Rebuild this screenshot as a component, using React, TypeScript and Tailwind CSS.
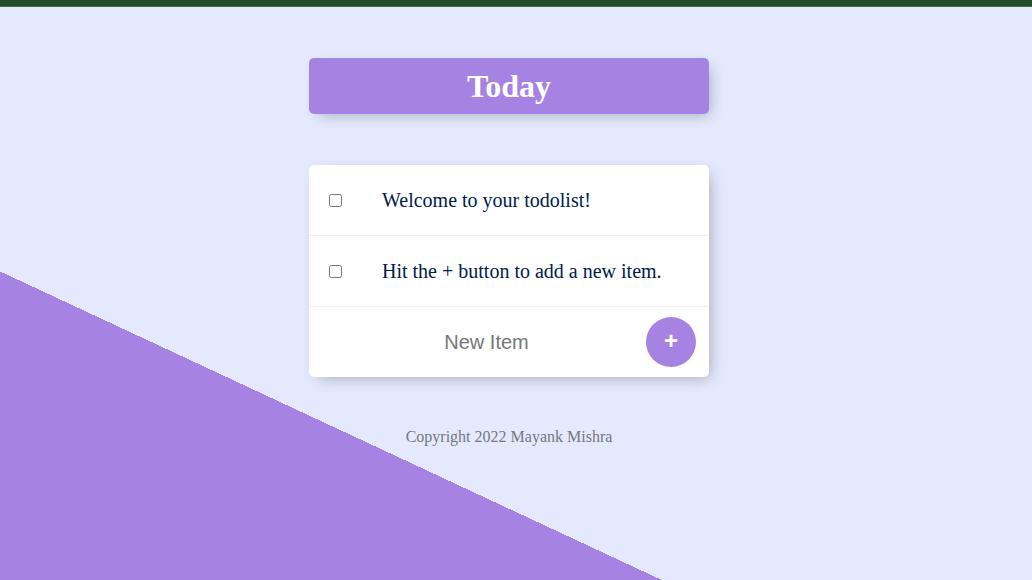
import React from "react";

export default function App() {
  const items = ["Welcome to your todolist!", "Hit the + button to add a new item."];
  return (
    <div className="w-full h-[580px] overflow-hidden bg-[linear-gradient(25deg,#A683E3_50%,#E4E9FD_50%)] bg-no-repeat bg-size-[100%_1024px] font-['Liberation_Serif',serif]">
      <div className="h-[7px] w-full bg-[#244d29] border-b border-[#3d6b42]" />
      <div className="w-[1018px] flex flex-col items-center">
        <div className="mt-[51px] w-[400px] h-[56px] rounded-[5px] bg-[#A683E3] flex items-center justify-center shadow-[5px_5px_15px_-5px_rgba(0,0,0,0.3)]">
          <h1 className="text-white font-bold text-[32px] leading-none">Today</h1>
        </div>
        <div className="mt-[51px] w-[400px] rounded-[5px] bg-white shadow-[5px_5px_15px_-5px_rgba(0,0,0,0.3)]">
          {items.map((t) => (
            <div key={t} className="h-[71px] flex items-center border-b border-[#F1F1F1]">
              <input type="checkbox" className="ml-[20px] w-[13px] h-[13px]" />
              <p className="ml-[40px] text-[20px] text-[#00204a]">{t}</p>
            </div>
          ))}
          <div className="h-[70px] flex items-center">
            <input
              type="text"
              placeholder="New Item"
              className="ml-[21px] w-[313px] h-[60px] text-center text-[20px] font-['Liberation_Sans',sans-serif] outline-none placeholder:text-[#767676]"
            />
            <button className="ml-[3px] w-[50px] h-[50px] rounded-full bg-[#A683E3] text-white font-bold text-[24px] font-['Liberation_Sans',sans-serif] flex items-center justify-center leading-none pb-[3px]">
              +
            </button>
          </div>
        </div>
        <p className="mt-[48px] text-[16px] text-[#777780]">Copyright 2022 Mayank Mishra</p>
      </div>
    </div>
  );
}
